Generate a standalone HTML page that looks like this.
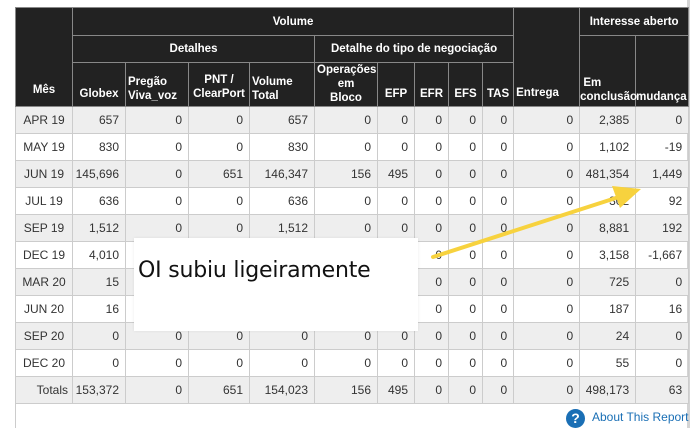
<!DOCTYPE html>
<html><head><meta charset="utf-8"><style>
body{margin:0;width:699px;height:428px;background:#fff;position:relative;overflow:hidden;font-family:"Liberation Sans",Arial,sans-serif}
table{position:absolute;left:15px;top:7px;border-collapse:collapse;table-layout:fixed;width:673px;font-size:12px;color:#333}
th{background:#222;color:#fff;font-weight:bold;border:1px solid #888;padding:0 2px;font-size:11.5px;line-height:14px;vertical-align:middle}
td{border:1px solid #ccc;text-align:right;padding:0 6px 0 2px;height:26px;white-space:nowrap}
td:first-child{text-align:center;padding:0}
tr.g td{background:#eee}
.bar{position:absolute;left:687px;top:0;width:3px;height:428px;background:#d4d4d4}
.lb{position:absolute;left:15px;top:404px;width:1px;height:24px;background:#ccc}
.call{position:absolute;left:134px;top:238px;width:284px;height:93px;background:#fff;box-shadow:0 0 3px rgba(0,0,0,.08);font-family:"DejaVu Sans",sans-serif;font-size:22px;color:#111}
.call span{position:absolute;left:4px;top:20px;letter-spacing:-0.2px}
.about{position:absolute;left:566px;top:410px;font-size:12px;color:#1a6fb5}
.q{position:absolute;left:566px;top:409px;width:19px;height:19px;border-radius:50%;background:#1a6fb5;color:#fff;font-weight:bold;text-align:center;font-size:14px;line-height:19px}
</style></head><body>
<div class="bar"></div><div class="lb"></div>
<table>
<colgroup><col style="width:57px"><col style="width:53px"><col style="width:63px"><col style="width:61px"><col style="width:65px"><col style="width:63px"><col style="width:37px"><col style="width:34px"><col style="width:34px"><col style="width:31px"><col style="width:66px"><col style="width:56px"><col style="width:53px"></colgroup>
<tr style="height:28px"><th rowspan="3" style="vertical-align:bottom;padding-bottom:9px">Mês</th><th colspan="9">Volume</th><th rowspan="3" style="vertical-align:bottom;padding-bottom:6px;text-align:left">Entrega</th><th colspan="2">Interesse aberto</th></tr>
<tr style="height:27px"><th colspan="4">Detalhes</th><th colspan="5">Detalhe do tipo de negociação</th><th rowspan="2" style="vertical-align:bottom;padding-bottom:2px;text-align:left;padding-left:0">&nbsp;Em<br>conclusão</th><th rowspan="2" style="vertical-align:bottom;padding-bottom:2px;text-align:left;padding-left:0">mudança</th></tr>
<tr style="height:44px"><th style="vertical-align:bottom;padding-bottom:5px">Globex</th><th style="vertical-align:bottom;padding-bottom:3px;text-align:left">Pregão<br>Viva_voz</th><th style="vertical-align:bottom;padding-bottom:5px">PNT /<br>ClearPort</th><th style="vertical-align:bottom;padding-bottom:3px;text-align:left">Volume<br>Total</th><th style="vertical-align:bottom;padding-bottom:1px">Operações<br>em<br>Bloco</th><th style="vertical-align:bottom;padding-bottom:5px">EFP</th><th style="vertical-align:bottom;padding-bottom:5px">EFR</th><th style="vertical-align:bottom;padding-bottom:5px">EFS</th><th style="vertical-align:bottom;padding-bottom:5px">TAS</th></tr>
<tr class="g"><td>APR 19</td><td>657</td><td>0</td><td>0</td><td>657</td><td>0</td><td>0</td><td>0</td><td>0</td><td>0</td><td>0</td><td>2,385</td><td>0</td></tr>
<tr><td>MAY 19</td><td>830</td><td>0</td><td>0</td><td>830</td><td>0</td><td>0</td><td>0</td><td>0</td><td>0</td><td>0</td><td>1,102</td><td>-19</td></tr>
<tr class="g"><td>JUN 19</td><td>145,696</td><td>0</td><td>651</td><td>146,347</td><td>156</td><td>495</td><td>0</td><td>0</td><td>0</td><td>0</td><td>481,354</td><td>1,449</td></tr>
<tr><td>JUL 19</td><td>636</td><td>0</td><td>0</td><td>636</td><td>0</td><td>0</td><td>0</td><td>0</td><td>0</td><td>0</td><td>302</td><td>92</td></tr>
<tr class="g"><td>SEP 19</td><td>1,512</td><td>0</td><td>0</td><td>1,512</td><td>0</td><td>0</td><td>0</td><td>0</td><td>0</td><td>0</td><td>8,881</td><td>192</td></tr>
<tr><td>DEC 19</td><td>4,010</td><td>0</td><td>0</td><td>0</td><td>0</td><td>0</td><td>0</td><td>0</td><td>0</td><td>0</td><td>3,158</td><td>-1,667</td></tr>
<tr class="g"><td>MAR 20</td><td>15</td><td>0</td><td>0</td><td>0</td><td>0</td><td>0</td><td>0</td><td>0</td><td>0</td><td>0</td><td>725</td><td>0</td></tr>
<tr><td>JUN 20</td><td>16</td><td>0</td><td>0</td><td>0</td><td>0</td><td>0</td><td>0</td><td>0</td><td>0</td><td>0</td><td>187</td><td>16</td></tr>
<tr class="g"><td>SEP 20</td><td>0</td><td>0</td><td>0</td><td>0</td><td>0</td><td>0</td><td>0</td><td>0</td><td>0</td><td>0</td><td>24</td><td>0</td></tr>
<tr><td>DEC 20</td><td>0</td><td>0</td><td>0</td><td>0</td><td>0</td><td>0</td><td>0</td><td>0</td><td>0</td><td>0</td><td>55</td><td>0</td></tr>
<tr class="g"><td style="text-align:right;padding-right:4px">Totals</td><td>153,372</td><td>0</td><td>651</td><td>154,023</td><td>156</td><td>495</td><td>0</td><td>0</td><td>0</td><td>0</td><td>498,173</td><td>63</td></tr>
</table>
<div class="call"><span>OI subiu ligeiramente</span></div>
<svg style="position:absolute;left:0;top:0" width="699" height="428"><line x1="433" y1="257" x2="622" y2="196" stroke="#f7d23e" stroke-width="4" stroke-linecap="round"/><polygon points="641,189 612,186 620,208" fill="#f7d23e"/></svg>
<div class="q">?</div><div class="about" style="left:592px">About This Report</div>
</body></html>
